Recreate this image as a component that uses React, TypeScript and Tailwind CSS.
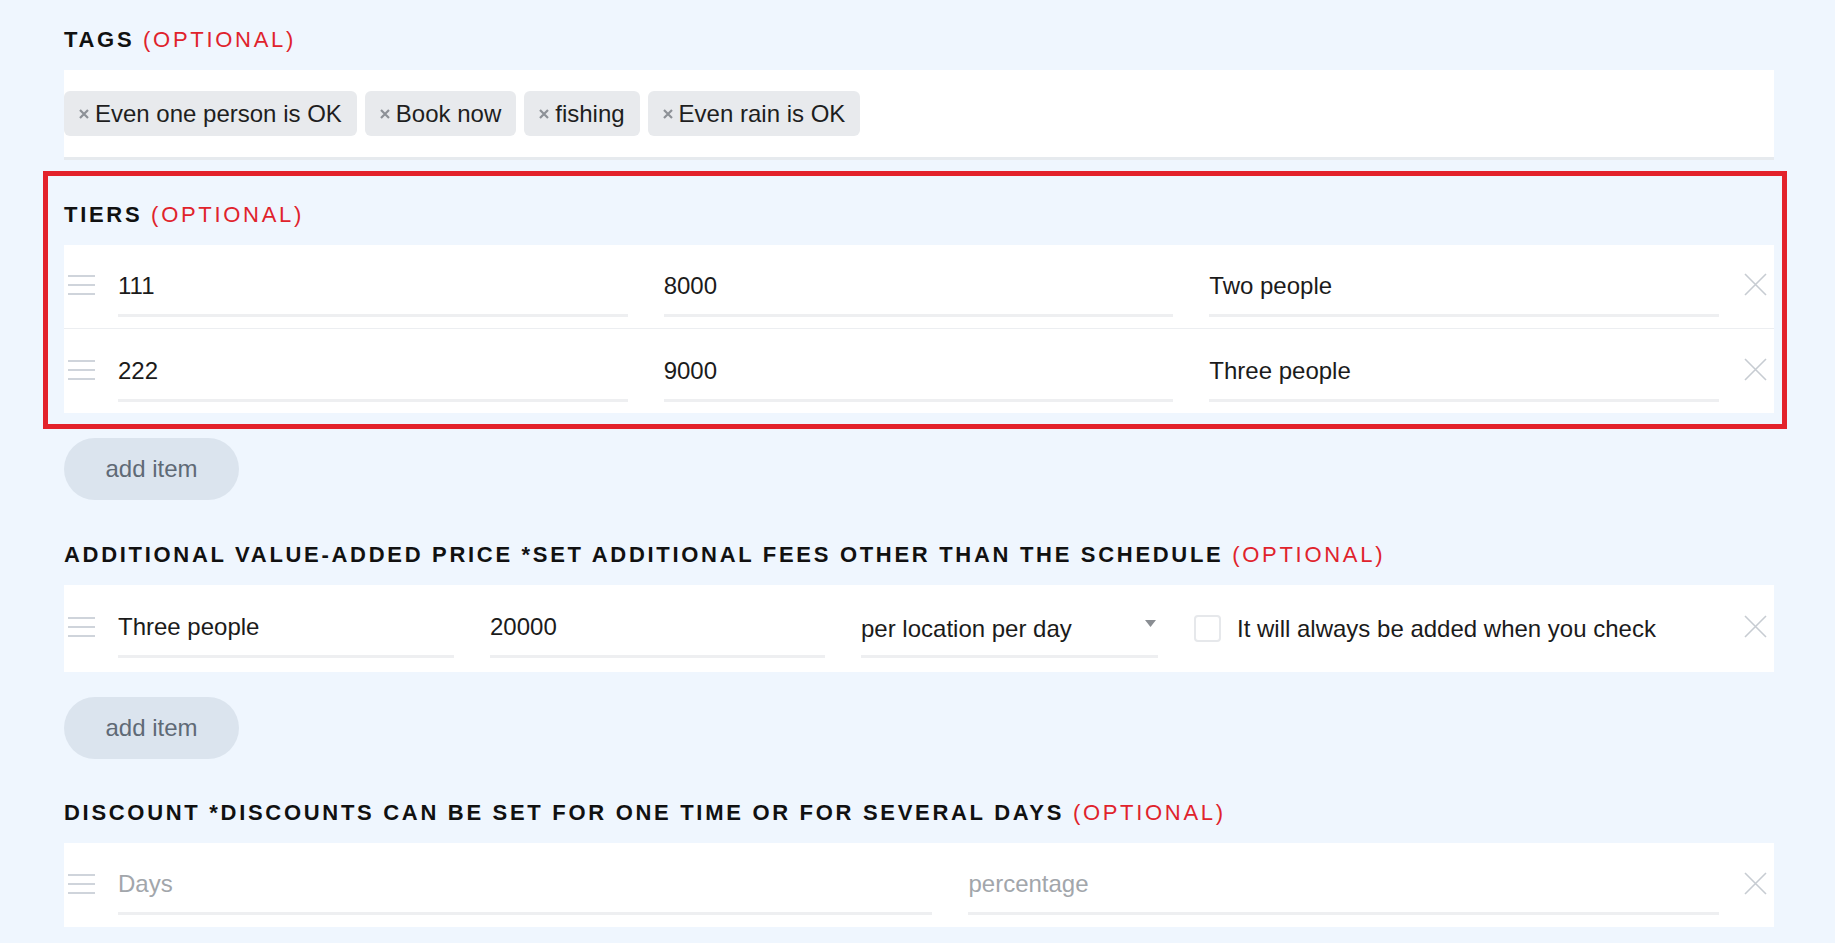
import type { ReactNode } from "react";

const font = { fontFamily: '"Liberation Sans", Arial, sans-serif' };

function Heading({ title }: { title: string }) {
    return (
        <h2 className="h-[28px] whitespace-nowrap text-[22px] font-bold uppercase leading-[28px] tracking-[2.7px] text-[#111]">
            {title} <span className="font-normal text-[#e0232c]">(OPTIONAL)</span>
        </h2>
    );
}

function Handle() {
    return (
        <div className="-mt-[3px] flex w-[27px] shrink-0 flex-col gap-[7px]">
            <span className="block h-[2px] w-full bg-[#cfd4db]" />
            <span className="block h-[2px] w-full bg-[#cfd4db]" />
            <span className="block h-[2px] w-full bg-[#cfd4db]" />
        </div>
    );
}

function RemoveIcon() {
    return (
        <svg width="23" height="23" viewBox="0 0 23 23" className="-mt-[4px] ml-[25px] shrink-0" aria-hidden="true">
            <path d="M1 1 L22 22 M22 1 L1 22" stroke="#c7ccd2" strokeWidth="1.6" fill="none" />
        </svg>
    );
}

function Field({ value, placeholder, className = "" }: { value?: string; placeholder?: string; className?: string }) {
    return (
        <div className={`flex h-[59px] min-w-0 items-center border-b-[3px] border-[#eeeff1] ${className}`}>
            {value ? (
                <span className="truncate text-[24px] text-[#1b1b1b]">{value}</span>
            ) : (
                <span className="truncate text-[24px] text-[#a2a6ab]">{placeholder}</span>
            )}
        </div>
    );
}

function Row({ children, height = "h-[84px]", divider = false }: { children: ReactNode; height?: string; divider?: boolean }) {
    return (
        <div className={`flex items-center pl-[4px] pr-[7px] ${height} ${divider ? "border-b border-[#eceef1]" : ""}`}>
            <Handle />
            <div className="ml-[23px] flex min-w-0 flex-1 items-center">{children}</div>
            <RemoveIcon />
        </div>
    );
}

function AddItem({ className = "" }: { className?: string }) {
    return (
        <button
            type="button"
            className={`h-[62px] w-[175px] rounded-full bg-[#dbe4ee] text-[24px] text-[#5f6a76] ${className}`}
        >
            add item
        </button>
    );
}

function Tag({ label }: { label: string }) {
    return (
        <div className="flex h-[45px] items-center gap-[6px] rounded-[6px] bg-[#e8eaed] pl-[15px] pr-[15px]">
            <svg width="10" height="10" viewBox="0 0 10 10" aria-hidden="true">
                <path d="M1 1 L9 9 M9 1 L1 9" stroke="#8d9197" strokeWidth="2.2" fill="none" />
            </svg>
            <span className="text-[24px] text-[#1e1e1e]">{label}</span>
        </div>
    );
}

const tags = ["Even one person is OK", "Book now", "fishing", "Even rain is OK"];

const tiers = [
    { qty: "111", price: "8000", name: "Two people" },
    { qty: "222", price: "9000", name: "Three people" },
];

export default function App() {
    return (
        <main style={font} className="min-h-screen overflow-hidden bg-[#eff6fe] pb-10 pl-[64px] pr-[61px] pt-[26px]">
            <section>
                <Heading title="Tags" />
                <div className="mt-[16px] flex h-[90px] items-center gap-[8px] border-b-[3px] border-[#e6eaee] bg-white">
                    {tags.map((tag) => (
                        <Tag key={tag} label={tag} />
                    ))}
                </div>
            </section>

            <section className="relative mt-[41px]">
                <Heading title="Tiers" />
                <div className="mt-[16px] bg-white">
                    {tiers.map((tier, index) => (
                        <Row key={tier.qty} divider={index === 0}>
                            <div className="grid flex-1 grid-cols-3 gap-[36px] pt-[2px]">
                                <Field value={tier.qty} />
                                <Field value={tier.price} />
                                <Field value={tier.name} />
                            </div>
                        </Row>
                    ))}
                </div>
                <div className="pointer-events-none absolute -bottom-[16px] -left-[21px] -right-[13px] -top-[30px] border-[5px] border-[#e3222b]" />
            </section>

            <AddItem className="mt-[25px]" />

            <section className="mt-[41px]">
                <Heading title="Additional value-added price *Set additional fees other than the schedule" />
                <div className="mt-[16px] bg-white">
                    <Row height="h-[87px]">
                        <Field value="Three people" className="w-[336px] shrink-0" />
                        <Field value="20000" className="ml-[36px] w-[335px] shrink-0" />
                        <div className="ml-[36px] flex h-[59px] w-[297px] shrink-0 items-center justify-between border-b-[3px] border-[#eeeff1] pr-[2px] pt-[4px]">
                            <span className="text-[24px] text-[#1b1b1b]">per location per day</span>
                            <svg width="11" height="7" viewBox="0 0 11 7" className="-mt-[12px]" aria-hidden="true">
                                <path d="M0 0 H11 L5.5 7 Z" fill="#8a8e93" />
                            </svg>
                        </div>
                        <div className="ml-[36px] flex items-center gap-[16px]">
                            <span className="block h-[27px] w-[27px] shrink-0 rounded-[4px] border-2 border-[#e6e8eb] bg-white" />
                            <span className="whitespace-nowrap text-[24px] text-[#1b1b1b]">It will always be added when you check</span>
                        </div>
                    </Row>
                </div>
            </section>

            <AddItem className="mt-[25px]" />

            <section className="mt-[40px]">
                <Heading title="Discount *Discounts can be set for one time or for several days" />
                <div className="mt-[16px] bg-white">
                    <Row>
                        <div className="grid flex-1 grid-cols-[815fr_751fr] gap-[36px]">
                            <Field placeholder="Days" />
                            <Field placeholder="percentage" />
                        </div>
                    </Row>
                </div>
            </section>
        </main>
    );
}
